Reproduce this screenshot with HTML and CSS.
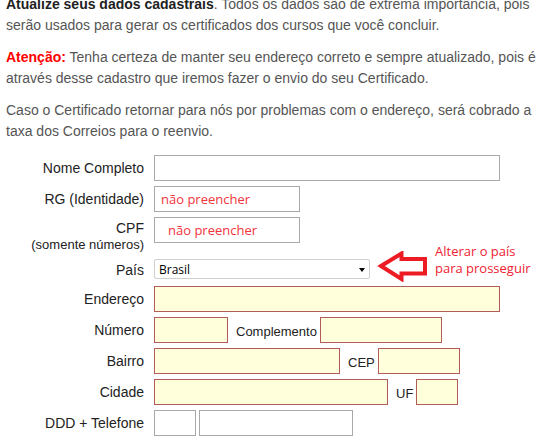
FILE: index.html
```html
<!DOCTYPE html>
<html lang="pt-BR">
<head>
  <meta charset="UTF-8" />
  <meta name="viewport" content="width=device-width, initial-scale=1.0"/>
  <title>Atualizar cadastro</title>
  <link rel="stylesheet" href="styles.css">
</head>
<body>
  <div class="page">
    <p class="intro"><b>Atualize seus dados cadastrais</b>. Todos os dados são de extrema importância, pois serão usados para gerar os certificados dos cursos que você concluir.</p>
    <p><b class="warn">Atenção:</b> Tenha certeza de manter seu endereço correto e sempre atualizado, pois é através desse cadastro que iremos fazer o envio do seu Certificado.</p>
    <p>Caso o Certificado retornar para nós por problemas com o endereço, será cobrado a taxa dos Correios para o reenvio.</p>

    <form class="cadastro">
      <div class="row">
        <label class="lbl" for="nome">Nome Completo</label>
        <input type="text" id="nome" class="field w-long" />
      </div>
      <div class="row">
        <label class="lbl" for="rg">RG (Identidade)</label>
        <input type="text" id="rg" class="field w-doc" placeholder="não preencher" />
      </div>
      <div class="row row-cpf">
        <label class="lbl lbl-cpf" for="cpf"><span class="main">CPF</span><span class="hint">(somente números)</span></label>
        <input type="text" id="cpf" class="field w-doc cpf" placeholder="não preencher" />
      </div>
      <div class="row row-pais">
        <label class="lbl lbl-pais" for="pais">País</label>
        <div class="select-wrap">
          <select id="pais" class="select">
            <option>Brasil</option>
          </select>
        </div>
        <div class="note">
          <svg class="arrow" width="52" height="31" viewBox="0 0 52 31">
            <polygon points="5,15 25.5,2.5 25.5,8 49,8 49,22.5 25.5,22.5 25.5,28" fill="none" stroke="#ed1c24" stroke-width="4" />
          </svg>
          <span class="note-text">Alterar o país<br>para prosseguir</span>
        </div>
      </div>
      <div class="row">
        <label class="lbl" for="endereco">Endereço</label>
        <input type="text" id="endereco" class="field req w-long" />
      </div>
      <div class="row">
        <label class="lbl" for="numero">Número</label>
        <input type="text" id="numero" class="field req w-num" />
        <label class="sub" for="compl">Complemento</label>
        <input type="text" id="compl" class="field req w-compl" />
      </div>
      <div class="row">
        <label class="lbl" for="bairro">Bairro</label>
        <input type="text" id="bairro" class="field req w-bairro" />
        <label class="sub" for="cep">CEP</label>
        <input type="text" id="cep" class="field req w-cep" />
      </div>
      <div class="row">
        <label class="lbl" for="cidade">Cidade</label>
        <input type="text" id="cidade" class="field req w-cidade" />
        <label class="sub" for="uf">UF</label>
        <input type="text" id="uf" class="field req w-short" />
      </div>
      <div class="row">
        <label class="lbl" for="ddd">DDD + Telefone</label>
        <input type="text" id="ddd" class="field w-short" />
        <input type="text" id="fone" class="field w-fone" />
      </div>
    </form>
  </div>
</body>
</html>
```

FILE: styles.css
```css
body {
  margin: 0;
  background: #fff;
  font-family: 'Liberation Sans', Arial, sans-serif;
  font-size: 14px;
  color: #555;
  overflow: hidden;
}
.page {
  padding: 0 0 0 6px;
}
p {
  margin: 0 0 11px;
  line-height: 21px;
}
.intro {
  margin-top: -6px;
}
.intro b {
  color: #222;
}
.warn {
  color: #ff0000;
}
.cadastro {
  display: flex;
  flex-direction: column;
  gap: 5px;
  padding-top: 2px;
}
.row {
  display: flex;
  align-items: flex-start;
  height: 26px;
}
.row-cpf {
  height: 37px;
}
.row-pais {
  height: 22px;
  position: relative;
}
.lbl {
  width: 138px;
  margin-right: 10px;
  text-align: right;
  line-height: 26px;
  color: #222;
  flex-shrink: 0;
}
.lbl-cpf {
  padding-top: 2px;
  line-height: 19px;
}
.lbl-cpf .main,
.lbl-cpf .hint {
  display: block;
}
.lbl-cpf .hint {
  font-size: 13px;
  line-height: 14px;
}
.lbl-pais {
  line-height: 22px;
}
.sub {
  font-size: 13px;
  line-height: 20px;
  padding-top: 5px;
  margin: 0 3px 0 8px;
  color: #222;
}
.field {
  box-sizing: border-box;
  height: 26px;
  margin: 0;
  padding: 0 6px;
  border: 1px solid #a9a9a9;
  border-radius: 0;
  background: #fff;
  font-family: 'Open Sans', sans-serif;
  font-size: 13px;
  color: #222;
  outline: none;
}
.field::placeholder {
  color: #f2323c;
  opacity: 1;
}
.field.cpf {
  padding-left: 13px;
}
.field.req {
  border-color: #b35a5a;
  background: #ffffdc;
}
.w-long { width: 346px; }
.w-doc { width: 146px; }
.w-num { width: 74px; }
.w-compl { width: 122px; }
.w-bairro { width: 186px; }
.w-cep { width: 82px; }
.w-cidade { width: 234px; }
.w-short { width: 42px; }
.w-fone { width: 154px; margin-left: 3px; }

.select-wrap {
  position: relative;
}
.select-wrap::after {
  content: "";
  position: absolute;
  right: 5px;
  top: 9px;
  border-left: 3.5px solid transparent;
  border-right: 3.5px solid transparent;
  border-top: 4px solid #000;
}
.select {
  -webkit-appearance: none;
  appearance: none;
  box-sizing: border-box;
  width: 216px;
  height: 20px;
  margin: 0;
  padding: 0 0 0 4px;
  border: 1px solid #d0d0d0;
  border-radius: 2px;
  background: #fff;
  font-family: 'Open Sans', sans-serif;
  font-size: 12px;
  color: #000;
}
.note {
  position: absolute;
  left: 370px;
  top: -16px;
  display: flex;
  align-items: flex-start;
}
.arrow {
  display: block;
  margin-top: 8px;
}
.note-text {
  margin-left: 7px;
  font-family: 'Open Sans', sans-serif;
  font-size: 13px;
  line-height: 17px;
  color: #ee2233;
}
```
